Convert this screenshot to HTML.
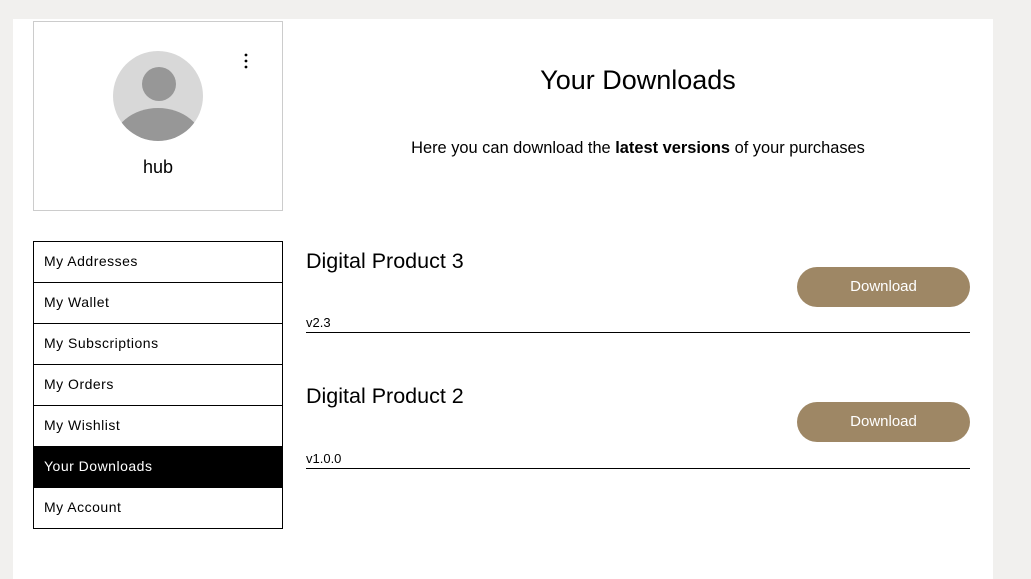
<!DOCTYPE html>
<html><head><style>
*{margin:0;padding:0;box-sizing:border-box}
body{width:1031px;height:564px;background:#f1f0ee;font-family:"Liberation Sans",sans-serif;position:relative;overflow:hidden;color:#000}
.panel{position:absolute;left:13px;top:19px;width:980px;height:560px;background:#fff}
.abs{position:absolute}
.prof{left:33px;top:21px;width:250px;height:190px;border:1px solid #ccc}
.menu{left:33px;top:241px;width:250px;border:1px solid #000}
.menu div{height:41px;border-top:1px solid #000;padding-left:10px;line-height:38px;font-size:14px;letter-spacing:.5px}
.menu div:first-child{border-top:none;height:40px}
.menu .act{background:#000;color:#fff}
.btn{width:173px;height:40px;border-radius:20px;background:#9e8765;color:#fff;font-size:15px;text-align:center;line-height:40px}
.line{height:1px;background:#000;width:664px;left:306px}
</style></head><body>
<div class="panel"></div>
<div class="abs prof">
<svg class="abs" style="left:79px;top:29px" width="90" height="90" viewBox="0 0 90 90">
<defs><clipPath id="c"><circle cx="45" cy="45" r="45"/></clipPath></defs>
<circle cx="45" cy="45" r="45" fill="#d8d8d8"/>
<circle cx="46" cy="33" r="17" fill="#979797"/>
<ellipse cx="45" cy="95" rx="46" ry="38" fill="#979797" clip-path="url(#c)"/>
</svg>
<svg class="abs" style="left:209px;top:30px" width="6" height="18"><circle cx="3" cy="3" r="1.4"/><circle cx="3" cy="9" r="1.4"/><circle cx="3" cy="15" r="1.4"/></svg>
<div class="abs" style="left:0;width:248px;top:135px;text-align:center;font-size:18px">hub</div>
</div>
<div class="abs menu">
<div>My Addresses</div><div>My Wallet</div><div>My Subscriptions</div><div>My Orders</div><div>My Wishlist</div><div class="act">Your Downloads</div><div>My Account</div>
</div>
<div class="abs" style="left:306px;width:664px;top:65px;text-align:center;font-size:27px">Your Downloads</div>
<div class="abs" style="left:306px;width:664px;top:139px;text-align:center;font-size:16.4px">Here you can download the <b>latest versions</b> of your purchases</div>
<div class="abs" style="left:306px;top:249px;font-size:21.5px">Digital Product 3</div>
<div class="abs btn" style="left:797px;top:267px">Download</div>
<div class="abs" style="left:306px;top:315px;font-size:13px">v2.3</div>
<div class="abs line" style="top:332px"></div>
<div class="abs" style="left:306px;top:384px;font-size:21.5px">Digital Product 2</div>
<div class="abs btn" style="left:797px;top:402px">Download</div>
<div class="abs" style="left:306px;top:451px;font-size:13px">v1.0.0</div>
<div class="abs line" style="top:468px"></div>
</body></html>
